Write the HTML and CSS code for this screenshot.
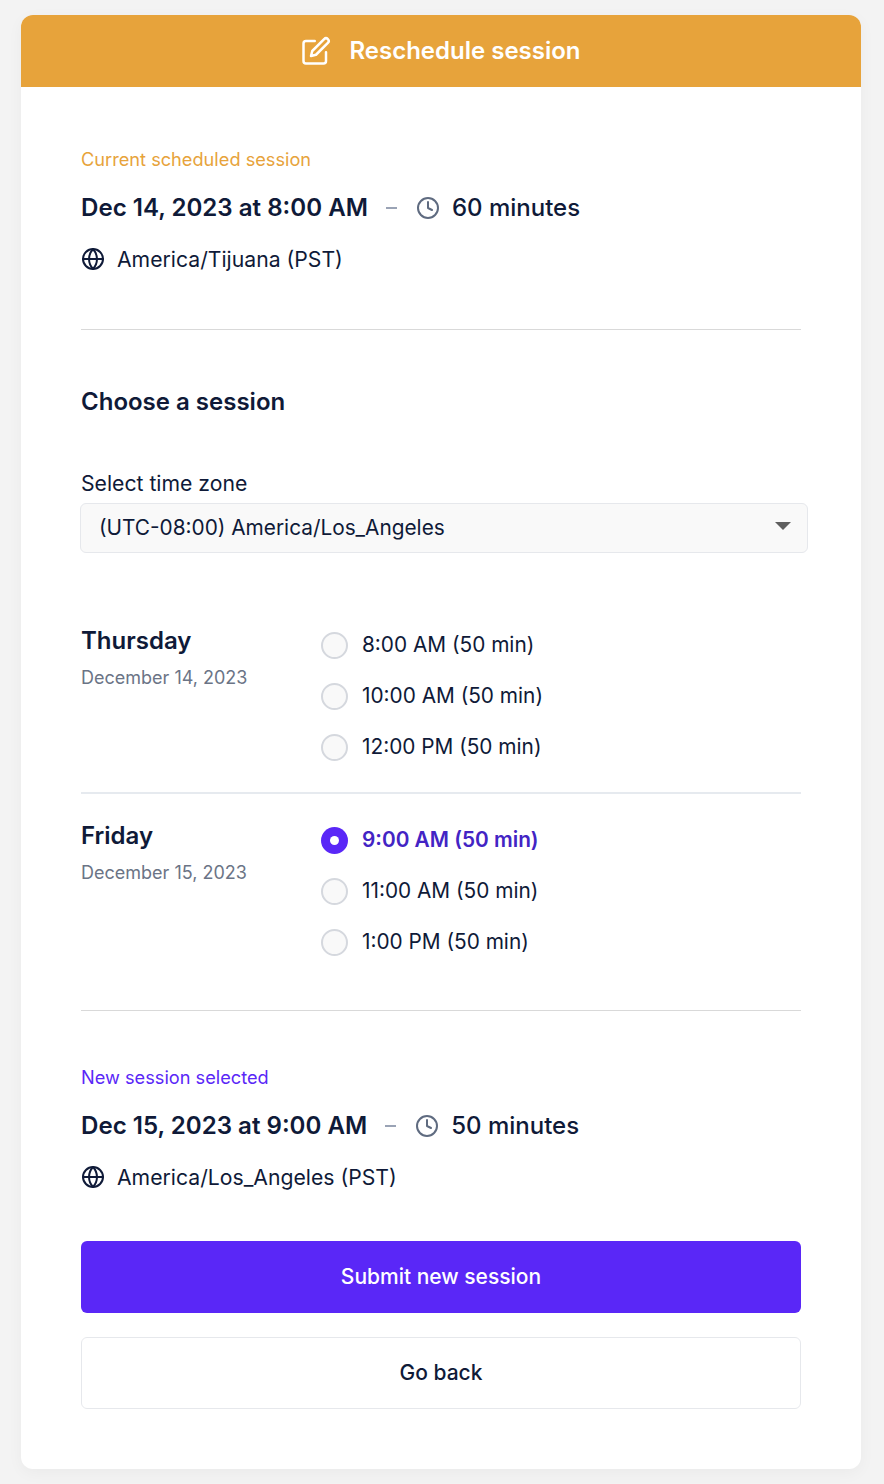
FILE: index.html
```html
<!DOCTYPE html>
<html lang="en">
<head>
<meta charset="utf-8">
<title>Reschedule session</title>
<link rel="stylesheet" href="styles.css">
</head>
<body>
<main class="card">
  <header class="card-head">
    <svg class="head-icon" viewBox="0 0 24 24" fill="none" stroke="currentColor" stroke-width="2" stroke-linecap="round" stroke-linejoin="round"><path d="M11 4H4a2 2 0 0 0-2 2v14a2 2 0 0 0 2 2h14a2 2 0 0 0 2-2v-7"/><path d="M18.5 2.5a2.121 2.121 0 0 1 3 3L12 15l-4 1 1-4 9.500-9.500z"/></svg>
    <h1 class="head-title">Reschedule session</h1>
  </header>
  <div class="card-body">
    <section class="summary summary-current">
      <p class="summary-label label-amber">Current scheduled session</p>
      <div class="summary-when">
        <span class="when-date">Dec 14, 2023 at 8:00 AM</span>
        <span class="when-dash"></span>
        <svg class="clock" viewBox="0 0 24 24" fill="none" stroke="currentColor" stroke-width="2" stroke-linecap="round" stroke-linejoin="round"><circle cx="12" cy="12" r="10"/><path d="M12 6v6l4 2"/></svg>
        <span class="when-len">60 minutes</span>
      </div>
      <div class="summary-zone">
        <svg class="globe" viewBox="0 0 24 24" fill="none" stroke="currentColor" stroke-width="2" stroke-linecap="round" stroke-linejoin="round"><circle cx="12" cy="12" r="10"/><path d="M2 12h20"/><path d="M12 2a15.300 15.300 0 0 1 4 10 15.300 15.300 0 0 1-4 10 15.300 15.300 0 0 1-4-10 15.300 15.300 0 0 1 4-10z"/></svg>
        <span>America/Tijuana (PST)</span>
      </div>
    </section>

    <section class="choose">
      <h2 class="choose-title">Choose a session</h2>
      <p class="select-label">Select time zone</p>
      <div class="select-box">
        <span>(UTC-08:00) America/Los_Angeles</span>
        <span class="caret"></span>
      </div>

      <div class="day day-first">
        <div class="day-info">
          <h3 class="day-name">Thursday</h3>
          <p class="day-date">December 14, 2023</p>
        </div>
        <ul class="slots">
          <li class="slot"><span class="radio"></span>8:00 AM (50 min)</li>
          <li class="slot"><span class="radio"></span>10:00 AM (50 min)</li>
          <li class="slot"><span class="radio"></span>12:00 PM (50 min)</li>
        </ul>
      </div>
      <div class="day">
        <div class="day-info">
          <h3 class="day-name">Friday</h3>
          <p class="day-date">December 15, 2023</p>
        </div>
        <ul class="slots">
          <li class="slot slot-on"><span class="radio radio-on"></span>9:00 AM (50 min)</li>
          <li class="slot"><span class="radio"></span>11:00 AM (50 min)</li>
          <li class="slot"><span class="radio"></span>1:00 PM (50 min)</li>
        </ul>
      </div>
    </section>

    <section class="summary summary-new">
      <p class="summary-label label-violet">New session selected</p>
      <div class="summary-when">
        <span class="when-date">Dec 15, 2023 at 9:00 AM</span>
        <span class="when-dash"></span>
        <svg class="clock" viewBox="0 0 24 24" fill="none" stroke="currentColor" stroke-width="2" stroke-linecap="round" stroke-linejoin="round"><circle cx="12" cy="12" r="10"/><path d="M12 6v6l4 2"/></svg>
        <span class="when-len">50 minutes</span>
      </div>
      <div class="summary-zone">
        <svg class="globe" viewBox="0 0 24 24" fill="none" stroke="currentColor" stroke-width="2" stroke-linecap="round" stroke-linejoin="round"><circle cx="12" cy="12" r="10"/><path d="M2 12h20"/><path d="M12 2a15.300 15.300 0 0 1 4 10 15.300 15.300 0 0 1-4 10 15.300 15.300 0 0 1-4-10 15.300 15.300 0 0 1 4-10z"/></svg>
        <span>America/Los_Angeles (PST)</span>
      </div>
    </section>

    <div class="actions">
      <button class="btn btn-primary" type="button">Submit new session</button>
      <button class="btn btn-ghost" type="button">Go back</button>
    </div>
  </div>
</main>
</body>
</html>
```
FILE: styles.css
```css
* { box-sizing: border-box; }
html, body { margin: 0; padding: 0; }
body {
  background: #f3f3f3;
  font-family: Inter, "Noto Sans", sans-serif;
  color: #0f1a38;
  padding: 15px 23px 15px 21px;
  width: 884px;
  height: 1484px;
  overflow: hidden;
}
h1, h2, h3, p, ul { margin: 0; padding: 0; }
ul { list-style: none; }

.card {
  background: #fff;
  border-radius: 12px;
  height: 1454px;
  overflow: hidden;
  box-shadow: 0 4px 16px rgba(0, 0, 0, 0.04);
}
.card-head {
  height: 72px;
  background: #e7a33b;
  color: #fff;
  display: flex;
  align-items: center;
  justify-content: center;
  gap: 18px;
}
.head-icon { width: 30px; height: 30px; }
.head-title { font-size: 24px; font-weight: 600; line-height: 28px; }

.card-body { padding: 60px; }

.summary-label { font-size: 18.2px; line-height: 24px; }
.label-amber { color: #e7a33b; }
.label-violet { color: #5a27f7; }
.summary-when {
  display: flex;
  align-items: center;
  margin-top: 21px;
  height: 32px;
}
.when-date { font-size: 24.1px; font-weight: 600; line-height: 32px; }
.when-dash { width: 11px; height: 2px; background: #9aa3b5; margin: 0 19px 0 18px; }
.clock { width: 24px; height: 24px; color: #5f6b80; margin-right: 12px; }
.when-len { font-size: 24px; font-weight: 500; line-height: 32px; }
.summary-zone {
  display: flex;
  align-items: center;
  gap: 12px;
  margin-top: 19px;
  font-size: 21.2px;
  line-height: 32px;
}
.globe { width: 24px; height: 24px; }

.choose { margin-top: 54px; border-top: 1px solid #d9d9d9; padding-top: 56px; }
.choose-title { font-size: 24px; font-weight: 600; line-height: 32px; }
.select-label { margin-top: 51px; font-size: 21.2px; line-height: 28px; }
.select-box {
  margin-top: 6px;
  width: 728px;
  height: 50px;
  margin-left: -1px;
  background: #f9f9f9;
  border: 1px solid #e6e8ec;
  border-radius: 6px;
  padding: 0 16px 2px 18px;
  display: flex;
  align-items: center;
  justify-content: space-between;
  font-size: 20.8px;
}
.caret {
  width: 0;
  height: 0;
  border-left: 8px solid transparent;
  border-right: 8px solid transparent;
  border-top: 8px solid #5f5f5f;
  margin-top: -2px;
}

.day {
  display: flex;
  border-top: 2px solid #e6eaef;
  padding: 26px 0 54px;
}
.day-first { border-top: 0; margin-top: 58px; padding: 14px 0 31px; }
.day-info { width: 240px; }
.day-name { font-size: 24px; font-weight: 600; line-height: 32px; }
.day-date { margin-top: 9px; font-size: 18px; line-height: 24px; color: #6b7486; }
.slots { display: flex; flex-direction: column; gap: 23px; padding-top: 6px; }
.slot { display: flex; align-items: center; gap: 14px; font-size: 20.8px; line-height: 28px; }
.slot-on { color: #4324c4; font-weight: 600; }
.radio { width: 27px; height: 27px; margin-top: 1px; border-radius: 50%; background: #f9f9f9; border: 2px solid #d5d8de; }
.radio-on { background: #5a27f7; border: 0; position: relative; }
.radio-on::after {
  content: "";
  position: absolute;
  left: 9px; top: 9px;
  width: 9px; height: 9px;
  border-radius: 50%;
  background: #fff;
}

.summary-new { border-top: 1px solid #d9d9d9; padding-top: 54px; }
.actions { margin-top: 48px; display: flex; flex-direction: column; gap: 24px; }
.btn {
  height: 72px;
  width: 100%;
  border-radius: 6px;
  padding: 0 0 2px;
  font-family: inherit;
  font-size: 21px;
  font-weight: 500;
}
.btn-primary { background: #5a27f7; color: #fff; border: 0; }
.btn-ghost { background: #fff; color: #0f1a38; border: 1px solid #e6e8ec; }
```
